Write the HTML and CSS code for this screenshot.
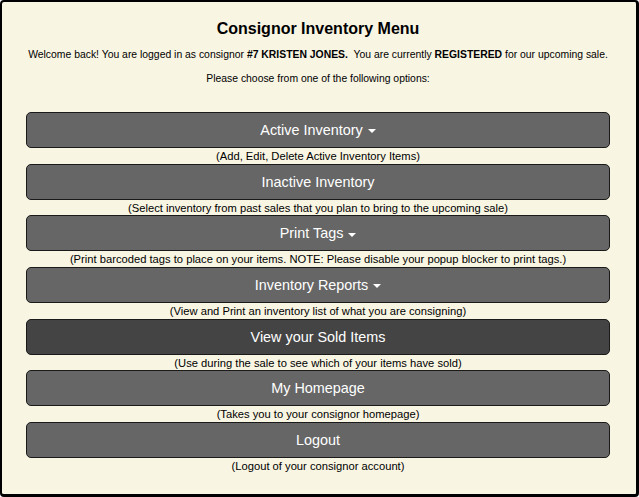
FILE: index.html
```html
<!DOCTYPE html>
<html>
<head>
<meta charset="utf-8">
<link rel="stylesheet" href="styles.css">
</head>
<body>
<div class="panel">
  <h1 class="title">Consignor Inventory Menu</h1>
  <p class="welcome">Welcome back! You are logged in as consignor <b>#7 KRISTEN JONES.</b>&nbsp; You are currently <b>REGISTERED</b> for our upcoming sale.</p>
  <p class="choose">Please choose from one of the following options:</p>
  <div class="menu">
    <div class="item"><div class="btn">Active Inventory <span class="caret"></span></div><div class="cap">(Add, Edit, Delete Active Inventory Items)</div></div>
    <div class="item"><div class="btn">Inactive Inventory</div><div class="cap">(Select inventory from past sales that you plan to bring to the upcoming sale)</div></div>
    <div class="item"><div class="btn">Print Tags <span class="caret"></span></div><div class="cap">(Print barcoded tags to place on your items. NOTE: Please disable your popup blocker to print tags.)</div></div>
    <div class="item"><div class="btn">Inventory Reports <span class="caret"></span></div><div class="cap">(View and Print an inventory list of what you are consigning)</div></div>
    <div class="item"><div class="btn btn-dark">View your Sold Items</div><div class="cap">(Use during the sale to see which of your items have sold)</div></div>
    <div class="item"><div class="btn">My Homepage</div><div class="cap">(Takes you to your consignor homepage)</div></div>
    <div class="item"><div class="btn">Logout</div><div class="cap">(Logout of your consignor account)</div></div>
  </div>
</div>
</body>
</html>
```
FILE: styles.css
```css
html, body {
  margin: 0;
  padding: 0;
  background: #ffffff;
}
body {
  font-family: "Liberation Sans", Arial, sans-serif;
  color: #000;
}
.panel {
  box-sizing: border-box;
  width: 639px;
  height: 497px;
  border: 2px solid #000;
  border-right-width: 3px;
  border-bottom-width: 3px;
  border-radius: 4px;
  background: #f8f5e3;
  padding: 0 26px 0 24px;
}
.title {
  margin: 0;
  padding-top: 17px;
  font-size: 16px;
  line-height: 20px;
  text-align: center;
  font-weight: bold;
}
.welcome {
  margin: 9px 0 0;
  font-size: 10.4px;
  line-height: 14px;
  text-align: center;
}
.choose {
  margin: 10px 0 0;
  font-size: 10.4px;
  line-height: 14px;
  text-align: center;
}
.menu {
  margin-top: 26px;
  display: flex;
  flex-direction: column;
}
.item {
  display: flex;
  flex-direction: column;
}
.btn {
  box-sizing: border-box;
  height: 36px;
  border: 1px solid #1a1a1a;
  border-radius: 5px;
  background: #666666;
  color: #fff;
  font-size: 14.4px;
  line-height: 34px;
  text-align: center;
}
.btn-dark {
  background: #444444;
}
.caret {
  display: inline-block;
  width: 0;
  height: 0;
  border-left: 4px solid transparent;
  border-right: 4px solid transparent;
  border-top: 4px solid #fff;
  vertical-align: middle;
  margin-left: 1px;
}
.cap {
  font-size: 11.2px;
  line-height: 14.67px;
  padding-top: 1px;
  text-align: center;
}
```
